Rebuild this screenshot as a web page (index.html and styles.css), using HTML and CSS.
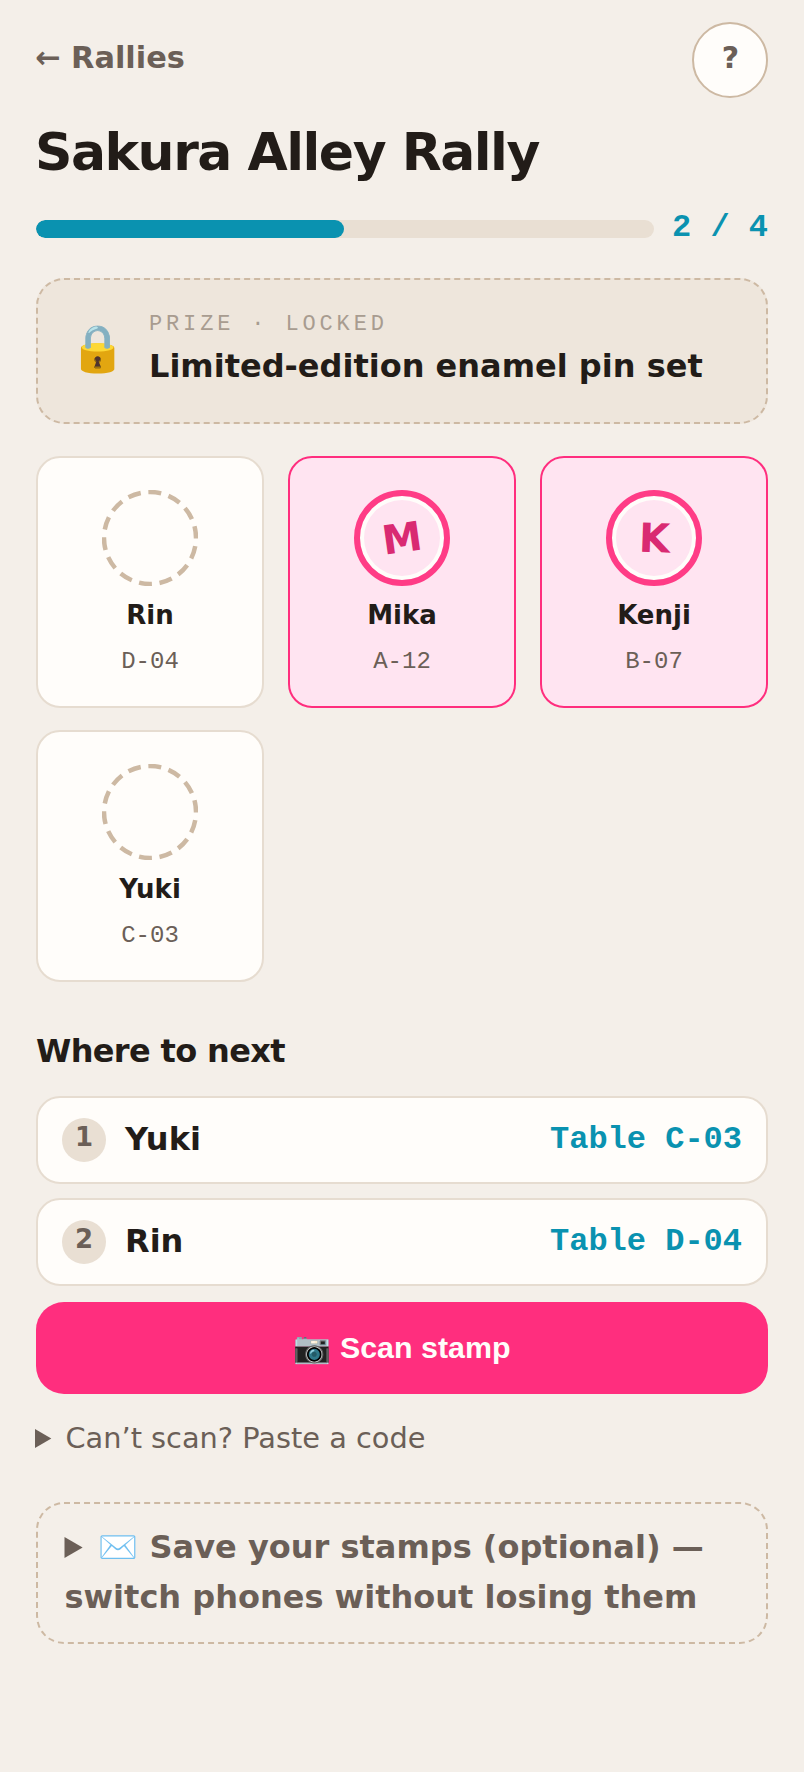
FILE: index.html
```html
<!DOCTYPE html>
<html lang="en">
<head>
    <meta charset="UTF-8">
    <meta name="viewport" content="width=device-width, initial-scale=1.0">
    <title>Sakura Alley Rally</title>
    <link rel="stylesheet" href="styles.css">
</head>
<body>
    <header class="top">
        <a class="back" href="#">← Rallies</a>
        <button class="help" type="button">?</button>
    </header>

    <h1>Sakura Alley Rally</h1>

    <div class="progress">
        <div class="track"><div class="fill"></div></div>
        <span class="count">2 / 4</span>
    </div>

    <section class="prize">
        <span class="prize-icon">🔒</span>
        <div>
            <div class="prize-label">PRIZE · LOCKED</div>
            <div class="prize-name">Limited-edition enamel pin set</div>
        </div>
    </section>

    <section class="stamps">
        <div class="stamp">
            <svg class="ring-empty" viewBox="0 0 96 96"><circle cx="48" cy="48" r="46"></circle></svg>
            <div class="stamp-name">Rin</div>
            <div class="stamp-table">D-04</div>
        </div>
        <div class="stamp done">
            <div class="ring"><span class="letter tilt-m">M</span></div>
            <div class="stamp-name">Mika</div>
            <div class="stamp-table">A-12</div>
        </div>
        <div class="stamp done">
            <div class="ring"><span class="letter tilt-k">K</span></div>
            <div class="stamp-name">Kenji</div>
            <div class="stamp-table">B-07</div>
        </div>
        <div class="stamp">
            <svg class="ring-empty" viewBox="0 0 96 96"><circle cx="48" cy="48" r="46"></circle></svg>
            <div class="stamp-name">Yuki</div>
            <div class="stamp-table">C-03</div>
        </div>
    </section>

    <h2>Where to next</h2>

    <ol class="route">
        <li class="stop">
            <span class="num">1</span>
            <span class="stop-name">Yuki</span>
            <span class="stop-table">Table C-03</span>
        </li>
        <li class="stop">
            <span class="num">2</span>
            <span class="stop-name">Rin</span>
            <span class="stop-table">Table D-04</span>
        </li>
    </ol>

    <button class="scan" type="button">📷 Scan stamp</button>

    <details class="paste">
        <summary>Can’t scan? Paste a code</summary>
    </details>

    <details class="save">
        <summary>✉️ Save your stamps (optional) — switch phones without losing them</summary>
    </details>
</body>
</html>
```

FILE: styles.css
```css
* {
    box-sizing: border-box;
}
body {
    font-family: "DejaVu Sans", sans-serif;
    background-color: #f4efe9;
    color: #221c18;
    margin: 0;
    padding: 22px 36px 40px;
}
.top {
    display: flex;
    justify-content: space-between;
    align-items: flex-start;
}
.back {
    color: #6b5f57;
    font-size: 30.4px;
    font-weight: bold;
    line-height: 36px;
    margin: 18px 0 0 -1px;
    text-decoration: none;
}
.help {
    width: 76px;
    height: 76px;
    border-radius: 50%;
    border: 2px solid #cdb9a3;
    background-color: #fffdfa;
    color: #6b5f57;
    font-family: "DejaVu Sans", sans-serif;
    font-size: 30px;
    font-weight: bold;
    padding: 0 0 6px 1px;
}
h1 {
    font-size: 52px;
    line-height: 64px;
    letter-spacing: -1.5px;
    margin: 22px 0 0 -1px;
}
.progress {
    display: flex;
    align-items: center;
    gap: 18px;
    margin-top: 25px;
}
.track {
    flex: 1;
    height: 18px;
    border-radius: 9px;
    background-color: #e9dfd3;
    overflow: hidden;
}
.fill {
    width: 49.8%;
    height: 100%;
    border-radius: 9px;
    background-color: #0a92b0;
}
.count {
    font-family: "Liberation Mono", monospace;
    font-size: 32px;
    font-weight: bold;
    color: #0a92b0;
    margin-bottom: 2px;
}
.prize {
    display: flex;
    align-items: center;
    gap: 23px;
    height: 146px;
    margin-top: 30px;
    padding: 0 31px 6px;
    background-color: #eee6dc;
    border: 2px dashed #cdb9a3;
    border-radius: 28px;
}
.prize-icon {
    font-size: 46px;
}
.prize-label {
    font-family: "Liberation Mono", monospace;
    font-size: 22px;
    letter-spacing: 3.85px;
    color: #a89c90;
}
.prize-name {
    font-size: 32px;
    font-weight: bold;
    margin-top: 10px;
}
.stamps {
    display: grid;
    grid-template-columns: repeat(3, 1fr);
    gap: 22px 24px;
    margin-top: 32px;
}
.stamp {
    height: 252px;
    padding-top: 32px;
    text-align: center;
    background-color: #fffdfa;
    border: 2px solid #e6dcd0;
    border-radius: 24px;
}
.stamp.done {
    background-color: #ffe4f1;
    border-color: #ff2e7e;
}
.ring-empty {
    display: block;
    width: 96px;
    height: 96px;
    margin: 0 auto;
    fill: none;
    stroke: #cdb9a3;
    stroke-width: 4.5px;
    stroke-dasharray: 13px 7.65px;
    stroke-dashoffset: -8.24px;
}
.ring {
    display: flex;
    align-items: center;
    justify-content: center;
    width: 96px;
    height: 96px;
    margin: 0 auto;
    border: 6px solid #ff3c86;
    border-radius: 50%;
    box-shadow: inset 0 0 0 4px #fffdfa;
}
.letter {
    font-size: 40px;
    font-weight: bold;
    color: #d92a72;
}
.tilt-m {
    transform: rotate(-8deg);
}
.tilt-k {
    transform: rotate(2deg);
}
.stamp-name {
    font-size: 26px;
    font-weight: bold;
    margin-top: 14px;
}
.stamp-table {
    font-family: "Liberation Mono", monospace;
    font-size: 24px;
    color: #6b5f57;
    margin-top: 18px;
}
h2 {
    font-size: 32px;
    line-height: 40px;
    letter-spacing: -0.02em;
    margin: 49px 0 0;
}
.route {
    list-style: none;
    display: flex;
    flex-direction: column;
    gap: 14px;
    margin: 25px 0 0;
    padding: 0;
}
.stop {
    display: flex;
    align-items: center;
    gap: 19px;
    height: 88px;
    padding: 0 24px 2px;
    background-color: #fffdfa;
    border: 2px solid #e6dcd0;
    border-radius: 24px;
}
.num {
    display: flex;
    justify-content: center;
    width: 44px;
    height: 44px;
    margin-top: 2px;
    border-radius: 50%;
    background-color: #e9dfd3;
    color: #6b5f57;
    font-size: 26px;
    font-weight: bold;
    line-height: 38px;
}
.stop-name {
    flex: 1;
    font-size: 32px;
    font-weight: bold;
}
.stop-table {
    font-family: "Liberation Mono", monospace;
    font-size: 32px;
    font-weight: bold;
    color: #0a92b0;
}
.scan {
    display: block;
    width: 100%;
    height: 92px;
    margin-top: 16px;
    padding: 0 0 2px;
    border: none;
    border-radius: 28px;
    background-color: #ff2e7e;
    color: #fffdfa;
    font-family: "Liberation Sans", sans-serif;
    font-size: 30.4px;
    font-weight: bold;
}
.paste {
    margin: 27px 0 0 -1px;
    font-size: 28.8px;
    color: #6b5f57;
}
.save {
    margin-top: 47px;
    padding: 18px 26.5px 20px;
    border: 2px dashed #cdb9a3;
    border-radius: 28px;
    color: #6b5f57;
    font-size: 32px;
    font-weight: bold;
    line-height: 50px;
}
```
